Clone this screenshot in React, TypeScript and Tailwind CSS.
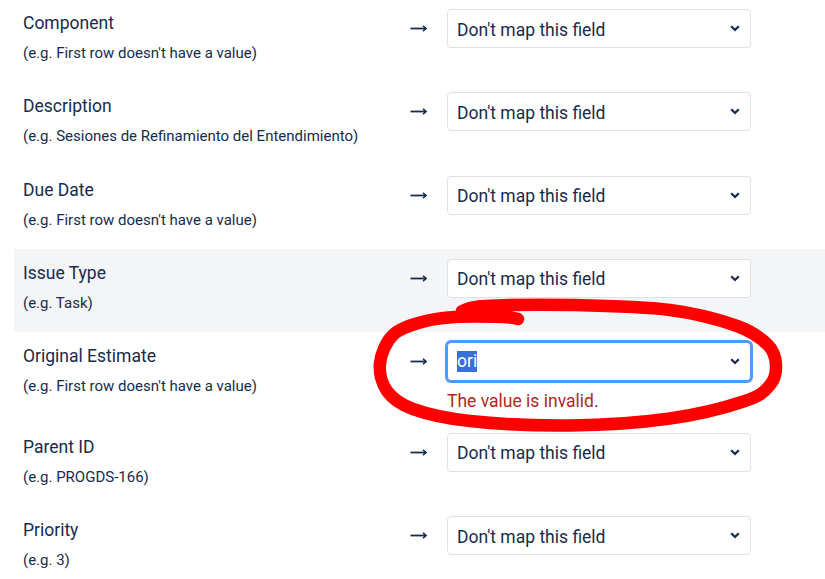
import React from "react";

type FieldRow = {
  label: string;
  example: string;
  highlight?: boolean;
  focused?: boolean;
  value?: string;
  error?: string;
};

const rows: FieldRow[] = [
  { label: "Component", example: "First row doesn't have a value" },
  { label: "Description", example: "Sesiones de Refinamiento del Entendimiento" },
  { label: "Due Date", example: "First row doesn't have a value" },
  { label: "Issue Type", example: "Task", highlight: true },
  {
    label: "Original Estimate",
    example: "First row doesn't have a value",
    focused: true,
    value: "ori",
    error: "The value is invalid.",
  },
  { label: "Parent ID", example: "PROGDS-166" },
  { label: "Priority", example: "3" },
];

// Hand-drawn marker loop around the estimate field
const markerPoints: [number, number][] = [
  [462, 311],
  [485, 306],
  [570, 305],
  [670, 310],
  [737, 326],
  [768, 345],
  [776, 365],
  [770, 385],
  [745, 401],
  [670, 418.5],
  [570, 425.5],
  [470, 421],
  [413, 409],
  [387, 391],
  [380, 363],
  [393, 335],
  [422, 322],
  [455, 317],
  [503, 317],
  [518, 319],
];

function smoothPath(pts: [number, number][]): string {
  let d = `M ${pts[0][0]} ${pts[0][1]}`;
  for (let i = 0; i < pts.length - 1; i++) {
    const p0 = pts[Math.max(0, i - 1)];
    const p1 = pts[i];
    const p2 = pts[i + 1];
    const p3 = pts[Math.min(pts.length - 1, i + 2)];
    const c1x = p1[0] + (p2[0] - p0[0]) / 6;
    const c1y = p1[1] + (p2[1] - p0[1]) / 6;
    const c2x = p2[0] - (p3[0] - p1[0]) / 6;
    const c2y = p2[1] - (p3[1] - p1[1]) / 6;
    d += ` C ${c1x.toFixed(1)} ${c1y.toFixed(1)} ${c2x.toFixed(1)} ${c2y.toFixed(1)} ${p2[0]} ${p2[1]}`;
  }
  return d;
}

function ArrowRight() {
  return (
    <svg width="17" height="9" viewBox="0 0 17 9" fill="none">
      <path d="M0.5 4.5 H16" stroke="#172b4d" strokeWidth="1.8" />
      <path d="M13 1.8 L16.2 4.5 L13 7.2" stroke="#172b4d" strokeWidth="1.6" strokeLinejoin="miter" />
    </svg>
  );
}

function Chevron() {
  return (
    <svg width="10" height="7" viewBox="0 0 10 7" fill="none">
      <path d="M1.2 1.3 L5 5 L8.8 1.3" stroke="#172b4d" strokeWidth="2.3" />
    </svg>
  );
}

function SelectBox({ focused, value }: { focused?: boolean; value?: string }) {
  return (
    <div
      className={
        focused
          ? "flex h-[39px] items-center justify-between rounded-[4px] border border-[#4c9aff] bg-white pl-[9px] pr-[10px] shadow-[0_0_0_2px_#4c9aff]"
          : "flex h-[39px] items-center justify-between rounded-[4px] border border-[#dfe1e6] bg-white pl-[9px] pr-[10px]"
      }
    >
      {focused ? (
        <span className="inline-block bg-[#3870d8] text-[17.5px] leading-[21px] text-white">{value}</span>
      ) : (
        <span className="translate-y-px text-[17.5px] leading-[24px] text-[#172b4d]">Don't map this field</span>
      )}
      <Chevron />
    </div>
  );
}

function MappingRow({ row }: { row: FieldRow }) {
  return (
    <div
      className={
        (row.focused ? "h-[90.67px] " : "h-[83.33px] ") +
        (row.highlight ? "bg-[#f4f5f7] " : "bg-white ") +
        "flex pl-[9px]"
      }
    >
      <div className="w-[377px] shrink-0 pt-[12px]">
        <div className="text-[17.5px] leading-[24px] text-[#172b4d]">{row.label}</div>
        <div className="mt-[8px] text-[15px] leading-[20px] text-[#172b4d]">(e.g. {row.example})</div>
      </div>
      <div className="w-[47px] shrink-0 pl-[10px] pt-[25px]">
        <ArrowRight />
      </div>
      <div className="w-[304px] shrink-0 pt-[10px]">
        <SelectBox focused={row.focused} value={row.value} />
        {row.error && (
          <div className="mt-[8px] text-[17.5px] leading-[24px] text-[#ae2a19]">{row.error}</div>
        )}
      </div>
    </div>
  );
}

export default function App() {
  return (
    <div className="relative h-[579px] w-[825px] overflow-hidden bg-white font-['Roboto',sans-serif]">
      <div className="-mt-px ml-[14px]">
        {rows.map((row) => (
          <MappingRow key={row.label} row={row} />
        ))}
      </div>
      <svg
        className="pointer-events-none absolute inset-0"
        width="825"
        height="579"
        viewBox="0 0 825 579"
        fill="none"
      >
        <path
          d={smoothPath(markerPoints)}
          stroke="#ff0000"
          strokeWidth="12.5"
          strokeLinecap="round"
          strokeLinejoin="round"
        />
      </svg>
    </div>
  );
}
